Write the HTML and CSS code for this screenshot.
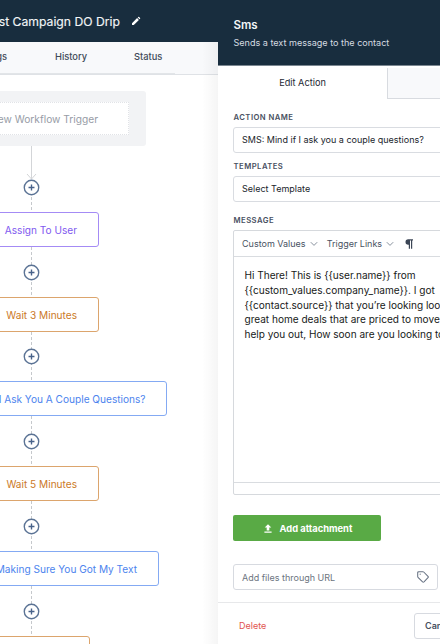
FILE: index.html
```html
<!DOCTYPE html>
<html lang="en">
<head>
<meta charset="utf-8">
<title>Campaign workflow</title>
<link rel="stylesheet" href="styles.css">
</head>
<body>
<svg class="defs" width="0" height="0" aria-hidden="true">
  <symbol id="plus" viewBox="0 0 16 16"><circle cx="8" cy="8" r="6.800" fill="#fff" stroke="#5b7395" stroke-width="1.300"/><path d="M8 5.200v5.600M5.200 8h5.600" stroke="#48628a" stroke-width="1.300"/></symbol>
  <symbol id="chevron" viewBox="0 0 8 6"><path d="M.8 1.2 4 4.4l3.200-3.200" fill="none" stroke="#7b8492" stroke-width=".9"/></symbol>
</svg>
<div class="app">
  <main class="workflow">
    <header class="titlebar"><h1>Test Campaign DO Drip</h1>
      <svg class="pencil" viewBox="0 0 10 10"><path d="M1 9V7.200L6.100 2.100l1.800 1.800L2.800 9zM6.700 1.500l.6-.6q.4-.3.8 0l1 1q.3.4 0 .8l-.6.6z" fill="#fff"/></svg>
    </header>
    <nav class="tabs"><span class="tab-settings">Settings</span><span class="tab-history">History</span><span class="tab-status">Status</span></nav>
    <section class="canvas">
      <div class="trigger-box"><div class="trigger">Add New Workflow Trigger</div></div>
      <div class="arrow"><svg viewBox="0 0 11 33"><path d="M5.500 0v33M1 28l4.500 5 4.500-5" fill="none" stroke="#d3d5d8"/></svg></div>
      <div class="link first"><svg><use href="#plus"/></svg></div>
      <div class="step user">Assign To User</div>
      <div class="link"><svg><use href="#plus"/></svg></div>
      <div class="step wait">Wait 3 Minutes</div>
      <div class="link"><svg><use href="#plus"/></svg></div>
      <div class="step sms wide">SMS: Mind If I Ask You A Couple Questions?</div>
      <div class="link"><svg><use href="#plus"/></svg></div>
      <div class="step wait">Wait 5 Minutes</div>
      <div class="link"><svg><use href="#plus"/></svg></div>
      <div class="step sms medium">SMS: Making Sure You Got My Text</div>
      <div class="link"><svg><use href="#plus"/></svg></div>
      <div class="step wait narrow">Wait 1 Day</div>
    </section>
  </main>
  <aside class="panel">
    <header class="panel-head"><h2>Sms</h2><p>Sends a text message to the contact</p></header>
    <div class="panel-tabs"><div class="active">Edit Action</div><div class="inactive"></div></div>
    <form class="form">
      <label>ACTION NAME</label>
      <div class="field">SMS: Mind if I ask you a couple questions?</div>
      <label class="templates-label">TEMPLATES</label>
      <div class="field">Select Template</div>
      <label class="message-label">MESSAGE</label>
      <div class="editor">
        <div class="toolbar"><span class="values">Custom Values</span><svg class="chev"><use href="#chevron"/></svg><span class="links">Trigger Links</span><svg class="chev"><use href="#chevron"/></svg>
          <svg class="para" viewBox="0 0 8 10"><path d="M3.200.3H8v1.300H7.200V9.700H6V1.600H5V9.700H3.800V5.700H3.200a2.700 2.700 0 0 1 0-5.400z" fill="#3c4656"/></svg>
        </div>
        <div class="message">Hi There! This is {{user.name}} from<br>{{custom_values.company_name}}. I got<br>{{contact.source}} that you’re looking looking for<br>great home deals that are priced to move. I’d<br>help you out, How soon are you looking to</div>
        <div class="statusbar"></div>
      </div>
      <div class="attach"><svg viewBox="0 0 8 9"><path d="M4 .2 7.300 3.600H5.300V6.500H2.700V3.600H.7zM.4 7.500h7.200v1.200H.4z" fill="#fff"/></svg><span>Add attachment</span></div>
      <div class="url-field"><span>Add files through URL</span><svg viewBox="0 0 12 12"><path d="M1.700.7H6q.4 0 .7.300l4.300 4.300q.7.700 0 1.400L7 10.900q-.7.600-1.400 0L1 6.300Q.7 6 .7 5.600V1.700Q.7.700 1.700.7z" fill="none" stroke="#687384" stroke-width="1.050"/><circle cx="3.200" cy="3.200" r=".6" fill="#687384"/></svg></div>
    </form>
    <footer class="actions"><span class="delete">Delete</span><span class="cancel">Cancel</span></footer>
  </aside>
</div>
</body>
</html>
```
FILE: styles.css
```css
* { box-sizing: border-box; }
body { margin: 0; font-family: Inter, "Liberation Sans", sans-serif; overflow: hidden; }
h1, h2, p { margin: 0; font-weight: 500; }
.defs { position: absolute; }
svg { display: block; flex: none; }
.app { display: flex; width: 440px; height: 644px; overflow: hidden; background: #fff; }

.workflow { position: relative; width: 218px; flex: none; overflow: hidden; white-space: nowrap; }
.workflow::after { content: ""; position: absolute; top: 42px; right: 0; bottom: 0; width: 16px; background: linear-gradient(to right, rgba(0,0,0,0), rgba(0,0,0,.04)); }
.titlebar { height: 42px; background: #182d3e; display: flex; align-items: center; color: #f2f5f7; }
.titlebar h1 { width: 120px; display: flex; justify-content: flex-end; font-size: 12.200px; font-weight: 400; -webkit-text-stroke: .15px #f2f5f7; }
.pencil { width: 10px; height: 10px; margin-left: 11px; }
.tabs { height: 33px; display: flex; align-items: center; padding-bottom: 3px; background: linear-gradient(#e2e5e8, #e2e5e8) 0 30.500px / 175px 1px no-repeat, #f8f9fb; border-bottom: 1px solid #dfe2e6; color: #414a59; font-size: 9.300px; font-weight: 500; }
.tab-settings { width: 7px; display: flex; justify-content: flex-end; }
.tab-history { margin-left: 48px; width: 79px; }
.canvas { width: 601px; margin: 16px 0 0 -269px; display: flex; flex-direction: column; align-items: center; }
.trigger-box { width: 229px; height: 55px; flex: none; padding: 11px 17px; background: #f2f3f5; border-radius: 3px; }
.trigger { height: 33px; display: flex; align-items: center; justify-content: flex-end; padding: 0 30px 0 0; background: #fff; border: 1px dotted #e1e3e7; color: #979ca6; font-size: 10.200px; }
.arrow { height: 33px; }
.arrow svg { width: 11px; height: 33px; }
.link { height: 49.800px; width: 17px; flex: none; display: flex; align-items: center; padding-top: 1px; background: repeating-linear-gradient(to bottom, #c5c8cc 0 3px, transparent 3px 5px) 8px 0 / 1px 100% no-repeat; }
.link.first { margin-top: -17px; background-position: 8px 25px; }
.link svg { width: 17px; height: 17px; }
.step { width: 134px; height: 35px; flex: none; display: flex; align-items: center; justify-content: flex-end; padding: 1px 20.500px 0 0; border: 1px solid; border-radius: 3px; background: #fff; font-size: 10.100px; }
.user { color: #8059ef; border-color: #a48bf5; }
.wait { color: #cb7927; border-color: #dca56d; }
.sms { color: #4d84ee; border-color: #84aaf3; }
.wide { width: 271px; }
.medium { width: 254px; }
.narrow { width: 117px; }

.panel { width: 222px; flex: none; overflow: hidden; background: #fff; white-space: nowrap; display: flex; flex-direction: column; }
.panel-head { height: 66px; padding: 18px 0 0 15.500px; background: #182d3e; border-bottom: 1px solid #7b8791; color: #f3f5f7; }
.panel-head h2 { font-size: 11.500px; line-height: 14px; font-weight: 600; }
.panel-head p { margin-top: 5px; font-size: 9.050px; line-height: 12px; font-weight: 400; color: #d6dce1; }
.panel-tabs { display: flex; height: 33px; padding-top: 2px; }
.active { width: 169px; display: flex; justify-content: center; align-items: center; padding-bottom: 2px; font-size: 9.200px; color: #242933; }
.inactive { flex: 1; background: #f8f9fb; border: solid #d8dbe0; border-width: 0 0 1px 1px; }
.form { margin: 0 0 0 15px; padding-top: 13px; flex: none; height: 503px; }
.form label { display: block; height: 16px; padding-left: .5px; line-height: 11px; font-size: 7.700px; font-weight: 600; letter-spacing: .45px; color: #485061; }
.field { height: 26px; width: 230px; padding: 0 0 0 8px; border: 1px solid #d9dce1; border-radius: 3px; font-size: 9px; line-height: 24px; color: #20242b; }
.form .field { margin-top: -1px; }
.form .templates-label { margin-top: 8px; }
.form .message-label { margin-top: 13px; height: 15px; }
.editor { width: 230px; height: 265px; border: 1px solid #d6d9dd; border-radius: 2px; display: flex; flex-direction: column; }
.toolbar { height: 26px; flex: none; display: flex; align-items: center; border-bottom: 1px solid #d9dce0; padding-left: 8px; color: #485262; font-size: 9px; }
.chev { width: 8px; height: 6px; margin-left: 4px; }
.links { margin-left: 9px; }
.para { width: 8px; height: 10px; margin-left: 11px; }
.message { padding: 11px 0 0 10.500px; flex: 1; font-size: 10.050px; line-height: 14.800px; color: #171a20; }
.statusbar { height: 12px; border-top: 1px solid #d9dce0; }
.attach { width: 148px; height: 26px; margin-top: 20px; display: flex; align-items: center; padding-left: 31px; border-radius: 2px; background: #59aa45; color: #fff; font-size: 9.350px; font-weight: 700; }
.attach svg { width: 8px; height: 9px; margin-right: 7.500px; }
.url-field { width: 205px; height: 26px; margin-top: 23px; display: flex; align-items: center; justify-content: space-between; padding: 0 8px; border: 1px solid #d7dae0; border-radius: 3px; font-size: 9px; color: #6c7480; }
.url-field svg { width: 12px; height: 12px; }
.actions { flex: 1; border-top: 1px solid #e7e8ea; display: flex; padding: 10px 0 0 21px; font-size: 9px; }
.delete { width: 175px; flex: none; line-height: 26px; color: #e15350; }
.cancel { width: 60px; height: 26px; flex: none; border: 1px solid #d7dae0; border-radius: 3px; padding-left: 10px; line-height: 24px; color: #485061; font-weight: 600; }
```
